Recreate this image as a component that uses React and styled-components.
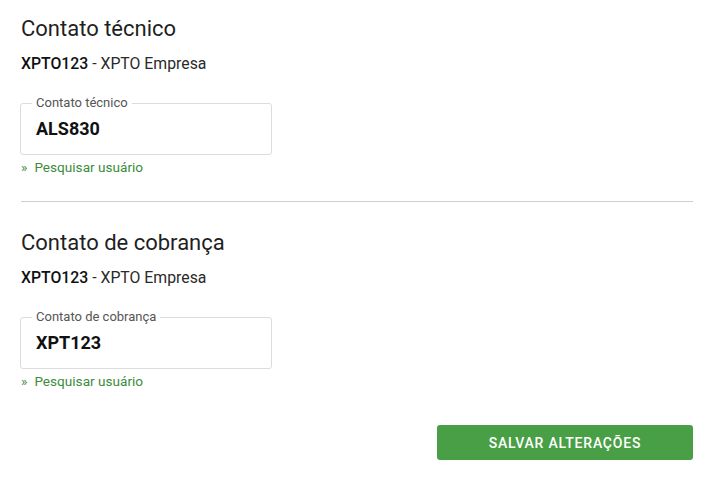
import React from "react";
import styled, { createGlobalStyle } from "styled-components";

const Global = createGlobalStyle`
  html, body { margin: 0; padding: 0; background: #fff; }
  body { font-family: Roboto, "Noto Sans", Arial, sans-serif; color: #212121; }
`;

const Page = styled.div`
  padding: 14px 27px 0 21px;
`;

const Section = styled.section`
  display: flex;
  flex-direction: column;
  align-items: flex-start;
  padding-bottom: 25px;
  & + & {
    border-top: 1px solid #cfcfcf;
    padding-top: 26px;
    padding-bottom: 0;
  }
`;

const Title = styled.h2`
  margin: 0;
  font-size: 22px;
  font-weight: 400;
  line-height: 30px;
  color: #1f1f1f;
`;

const Company = styled.div`
  margin-top: 10px;
  font-size: 15.8px;
  line-height: 20px;
  color: #2a2a2a;
  & b { font-weight: 500; color: #111; }
`;

const Field = styled.div`
  position: relative;
  box-sizing: border-box;
  margin-top: 29px;
  margin-left: -1px;
  width: 252px;
  border: 1px solid #dcdcdc;
  border-radius: 3px;
  padding: 14px 15px;
`;

const Legend = styled.span`
  position: absolute;
  top: -8px;
  left: 11px;
  padding: 0 4px;
  background: #fff;
  font-size: 13px;
  line-height: 14px;
  color: #555;
`;

const Value = styled.div`
  font-size: 18px;
  font-weight: 700;
  line-height: 22px;
  color: #111;
`;

const SearchLink = styled.a`
  margin-top: 3px;
  font-size: 13.6px;
  line-height: 18px;
  color: #3c8c3c;
  text-decoration: none;
  cursor: pointer;
  & span { margin-right: 7px; }
`;

const Actions = styled.div`
  display: flex;
  justify-content: flex-end;
  margin-top: 35px;
`;

const SaveButton = styled.button`
  width: 256px;
  height: 35px;
  border: none;
  border-radius: 3px;
  background: #499f45;
  color: #fff;
  font-family: Roboto, Arial, sans-serif;
  font-size: 14px;
  font-weight: 500;
  letter-spacing: 0.8px;
  text-transform: uppercase;
  cursor: pointer;
`;

function Contact({ title, code, company, label, value }) {
  return (
    <Section>
      <Title>{title}</Title>
      <Company>
        <b>{code}</b> - {company}
      </Company>
      <Field>
        <Legend>{label}</Legend>
        <Value>{value}</Value>
      </Field>
      <SearchLink>
        <span>»</span>Pesquisar usuário
      </SearchLink>
    </Section>
  );
}

export default function App() {
  return (
    <>
      <Global />
      <Page>
        <Contact
          title="Contato técnico"
          code="XPTO123"
          company="XPTO Empresa"
          label="Contato técnico"
          value="ALS830"
        />
        <Contact
          title="Contato de cobrança"
          code="XPTO123"
          company="XPTO Empresa"
          label="Contato de cobrança"
          value="XPT123"
        />
        <Actions>
          <SaveButton>Salvar alterações</SaveButton>
        </Actions>
      </Page>
    </>
  );
}
